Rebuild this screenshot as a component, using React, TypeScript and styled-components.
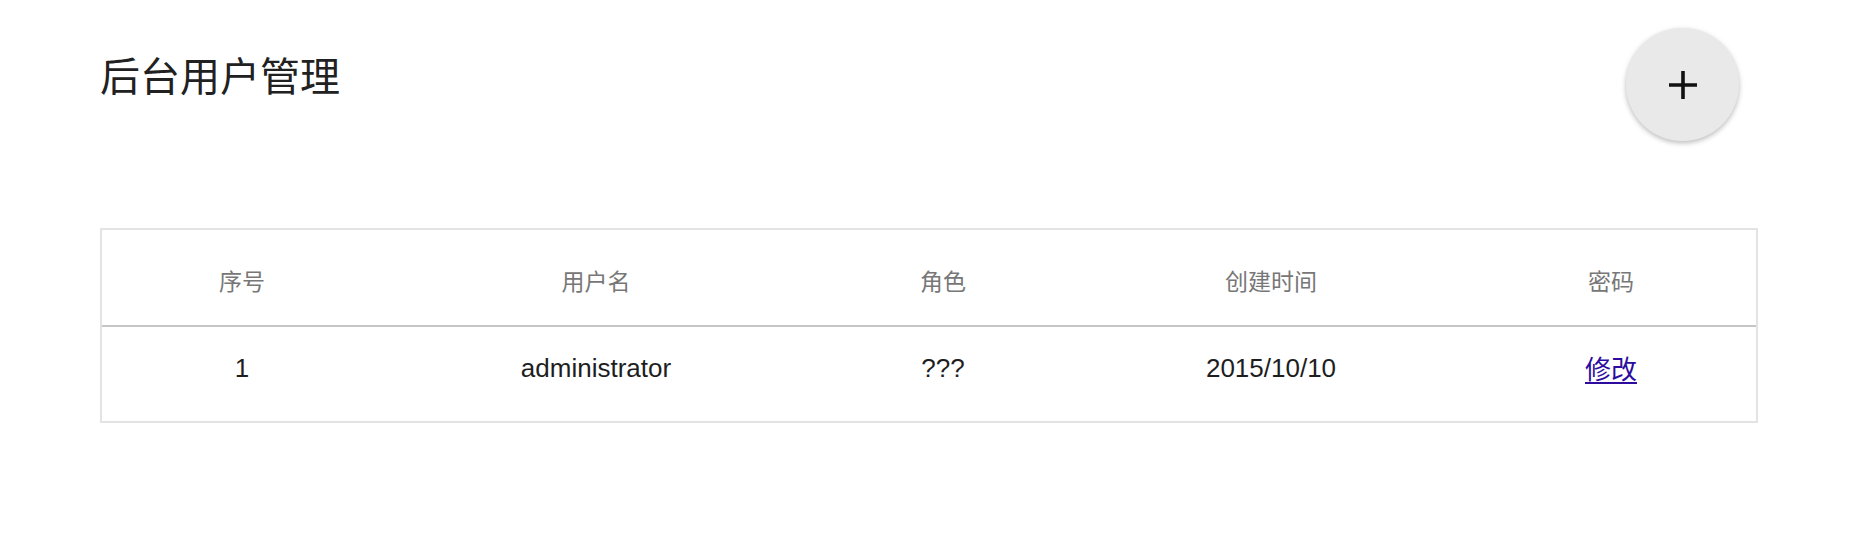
import React from "react";
import styled, { createGlobalStyle } from "styled-components";

const GlobalStyle = createGlobalStyle`
  html, body {
    margin: 0;
    padding: 0;
    background: #ffffff;
  }
  body {
    font-family: "Liberation Sans", "Noto Sans CJK SC", sans-serif;
    color: #212121;
  }
`;

const Page = styled.div`
  width: 1658px;
  margin-left: 100px;
`;

const Header = styled.header`
  height: 228px;
  box-sizing: border-box;
  padding-top: 28px;
  display: flex;
  justify-content: space-between;
  align-items: flex-start;
`;

const Title = styled.h1`
  margin: 20px 0 0 0;
  font-size: 40px;
  line-height: 58px;
  font-weight: 400;
  color: #212121;
`;

const Fab = styled.button`
  width: 113px;
  height: 113px;
  margin-right: 19px;
  border: none;
  border-radius: 50%;
  background: #e9e9e9;
  padding: 0;
  display: flex;
  align-items: center;
  justify-content: center;
  cursor: pointer;
  box-shadow: 0 2px 6px rgba(0, 0, 0, 0.14), 0 2px 4px rgba(0, 0, 0, 0.14);
`;

const Table = styled.table`
  width: 100%;
  border-collapse: separate;
  border-spacing: 0;
  border: 2px solid #e3e3e3;
  table-layout: fixed;
`;

const HeadCell = styled.th`
  height: 97px;
  padding: 5px 0 0 0;
  box-sizing: border-box;
  text-align: center;
  font-weight: 400;
  font-size: 23px;
  color: #777777;
  border-bottom: 2px solid #c6c6c6;
`;

const Cell = styled.td`
  height: 94px;
  padding: 0 0 11px 0;
  box-sizing: border-box;
  text-align: center;
  font-size: 26px;
  color: #1e1e1e;
`;

const EditLink = styled.a`
  color: #2c0b9e;
  text-decoration: underline;
  text-underline-offset: 3px;
  vertical-align: 3px;
  cursor: pointer;
`;

const PlusIcon = () => (
  <svg width="30" height="30" viewBox="0 0 30 30">
    <path d="M15 1 V29 M1 15 H29" stroke="#111" strokeWidth="3.6" fill="none" />
  </svg>
);

const columns = [
  { title: "序号", width: 280 },
  { title: "用户名", width: 428 },
  { title: "角色", width: 266 },
  { title: "创建时间", width: 390 },
  { title: "密码", width: 290 },
];

const rows = [{ id: 1, name: "administrator", role: "???", created: "2015/10/10" }];

export default function App() {
  return (
    <>
      <GlobalStyle />
      <Page>
        <Header>
          <Title>后台用户管理</Title>
          <Fab aria-label="add">
            <PlusIcon />
          </Fab>
        </Header>
        <Table>
          <colgroup>
            {columns.map((c) => (
              <col key={c.title} style={{ width: c.width }} />
            ))}
          </colgroup>
          <thead>
            <tr>
              {columns.map((c) => (
                <HeadCell key={c.title}>{c.title}</HeadCell>
              ))}
            </tr>
          </thead>
          <tbody>
            {rows.map((r) => (
              <tr key={r.id}>
                <Cell>{r.id}</Cell>
                <Cell>{r.name}</Cell>
                <Cell>{r.role}</Cell>
                <Cell>{r.created}</Cell>
                <Cell>
                  <EditLink>修改</EditLink>
                </Cell>
              </tr>
            ))}
          </tbody>
        </Table>
      </Page>
    </>
  );
}
